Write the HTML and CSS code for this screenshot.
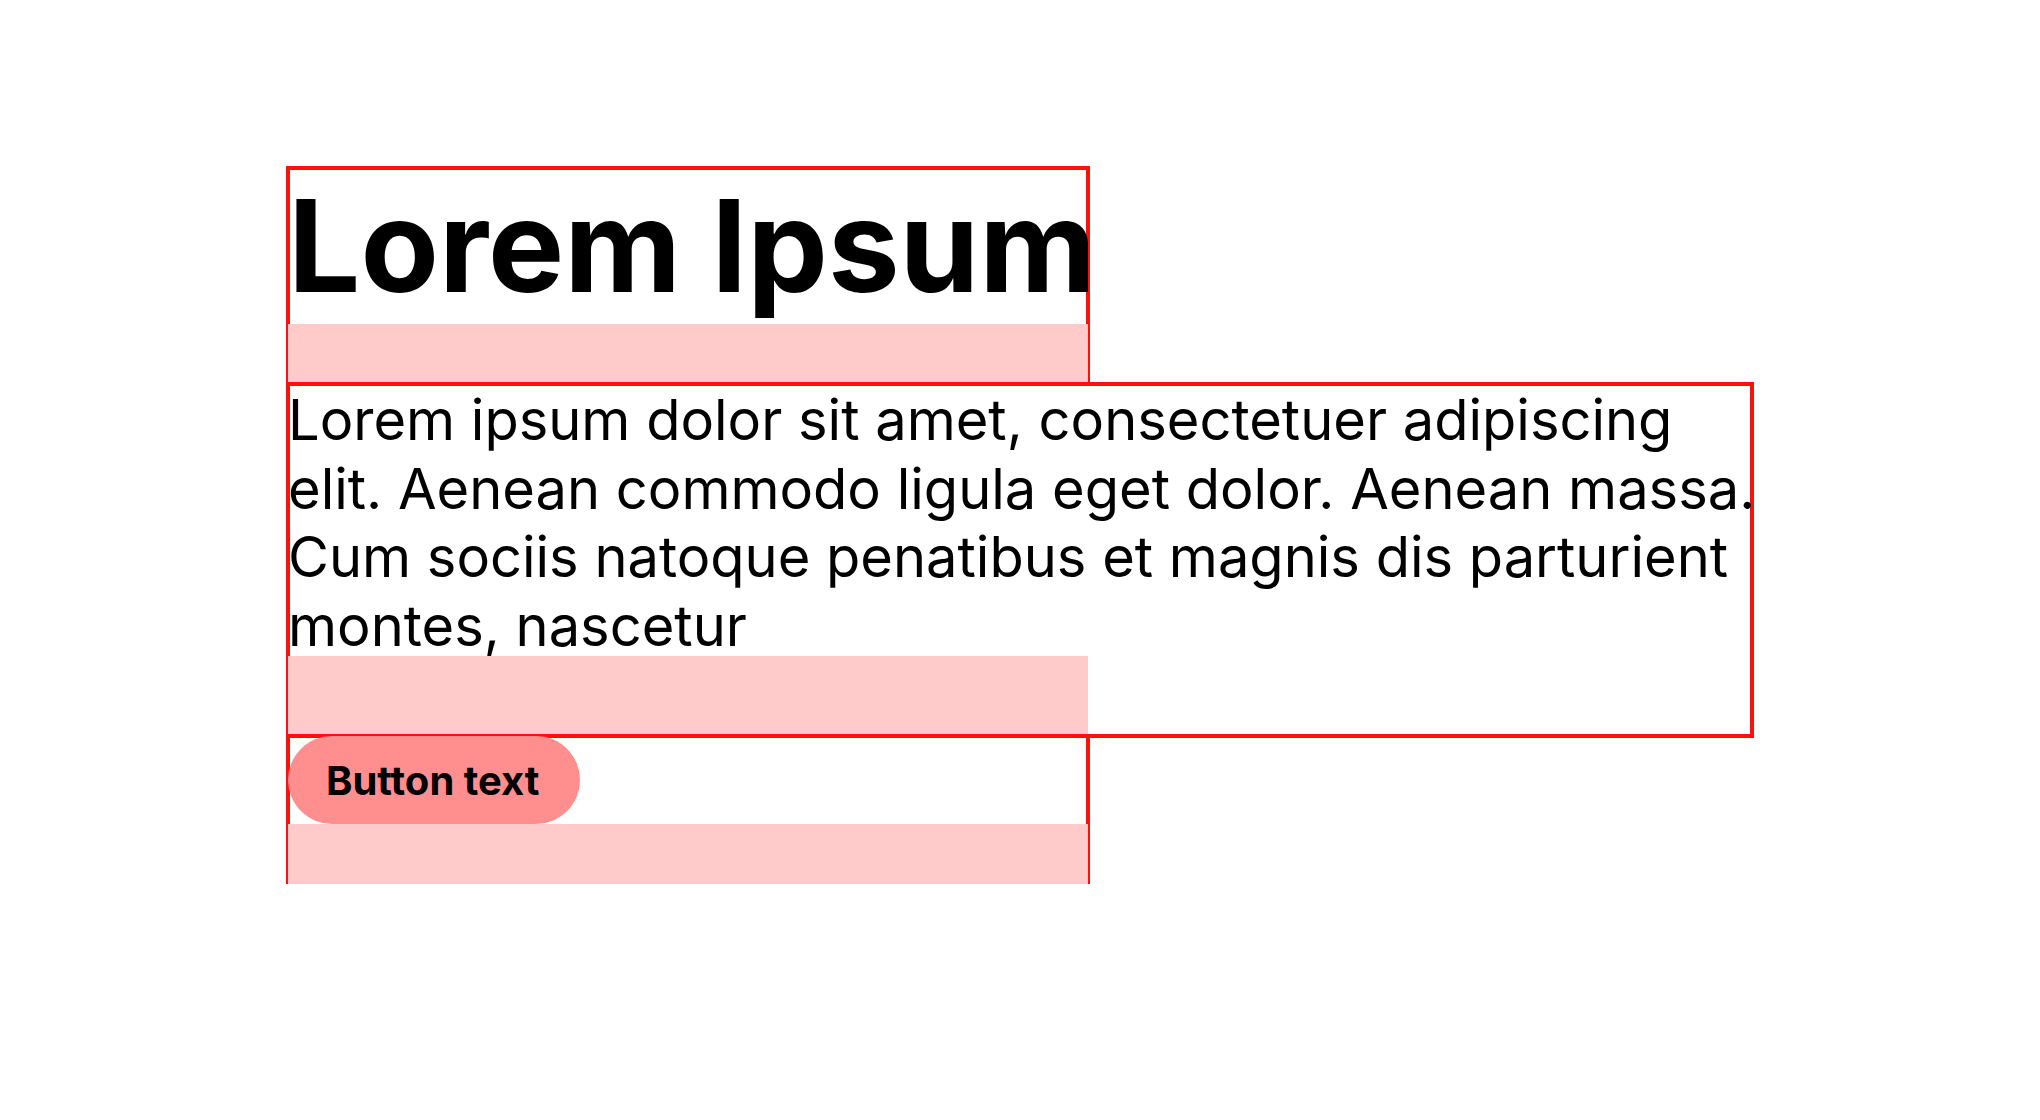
FILE: index.html
```html
<!DOCTYPE html>
<html lang="en">
<head>
<meta charset="utf-8">
<title>Lorem Ipsum</title>
<link rel="stylesheet" href="styles.css">
</head>
<body>
<main class="stack">
  <section class="blk blk-head">
    <h1 class="title">Lorem Ipsum</h1>
    <div class="gap gap-sm"></div>
  </section>
  <section class="blk blk-para">
    <p class="body">Lorem ipsum dolor sit amet, consectetuer adipiscing elit. Aenean commodo ligula eget dolor. Aenean massa. Cum sociis natoque penatibus et magnis dis parturient montes, nascetur</p>
    <div class="gap gap-lg"></div>
  </section>
  <section class="blk blk-btn">
    <button class="btn" type="button">Button text</button>
    <div class="gap gap-sm"></div>
  </section>
</main>
</body>
</html>
```

FILE: styles.css
```css
html, body {
  margin: 0;
  padding: 0;
  background: #ffffff;
}

body {
  font-family: Inter, "Noto Sans", "Liberation Sans", sans-serif;
  color: #000000;
}

.stack {
  display: flex;
  flex-direction: column;
  align-items: flex-start;
  padding: 168px 0 0 288px;
}

.blk {
  display: flex;
  flex-direction: column;
  align-items: flex-start;
  outline: 2px solid #ff0f0f;
  box-shadow: inset 0 0 0 2px #ff0f0f;
}

.blk-head,
.blk-btn {
  width: 800px;
}

.blk-para {
  width: 1464px;
}

.title {
  margin: 0;
  font-size: 128px;
  font-weight: 700;
  line-height: 156px;
  white-space: nowrap;
}

.body {
  box-sizing: border-box;
  width: 1484px;
  height: 272px;
  margin: 0;
  padding-top: 2px;
  font-size: 56px;
  font-weight: 400;
  line-height: 68.6px;
}

.btn {
  font-family: inherit;
  font-size: 40px;
  font-weight: 700;
  line-height: 48px;
  color: #000000;
  background: #ff8f8f;
  border: 0;
  border-radius: 44px;
  padding: 21px 41px 19px 38px;
  margin: 0;
}

.gap {
  width: 800px;
  background: #ffcaca;
}

.gap-sm {
  height: 60px;
}

.gap-lg {
  height: 80px;
}
```
